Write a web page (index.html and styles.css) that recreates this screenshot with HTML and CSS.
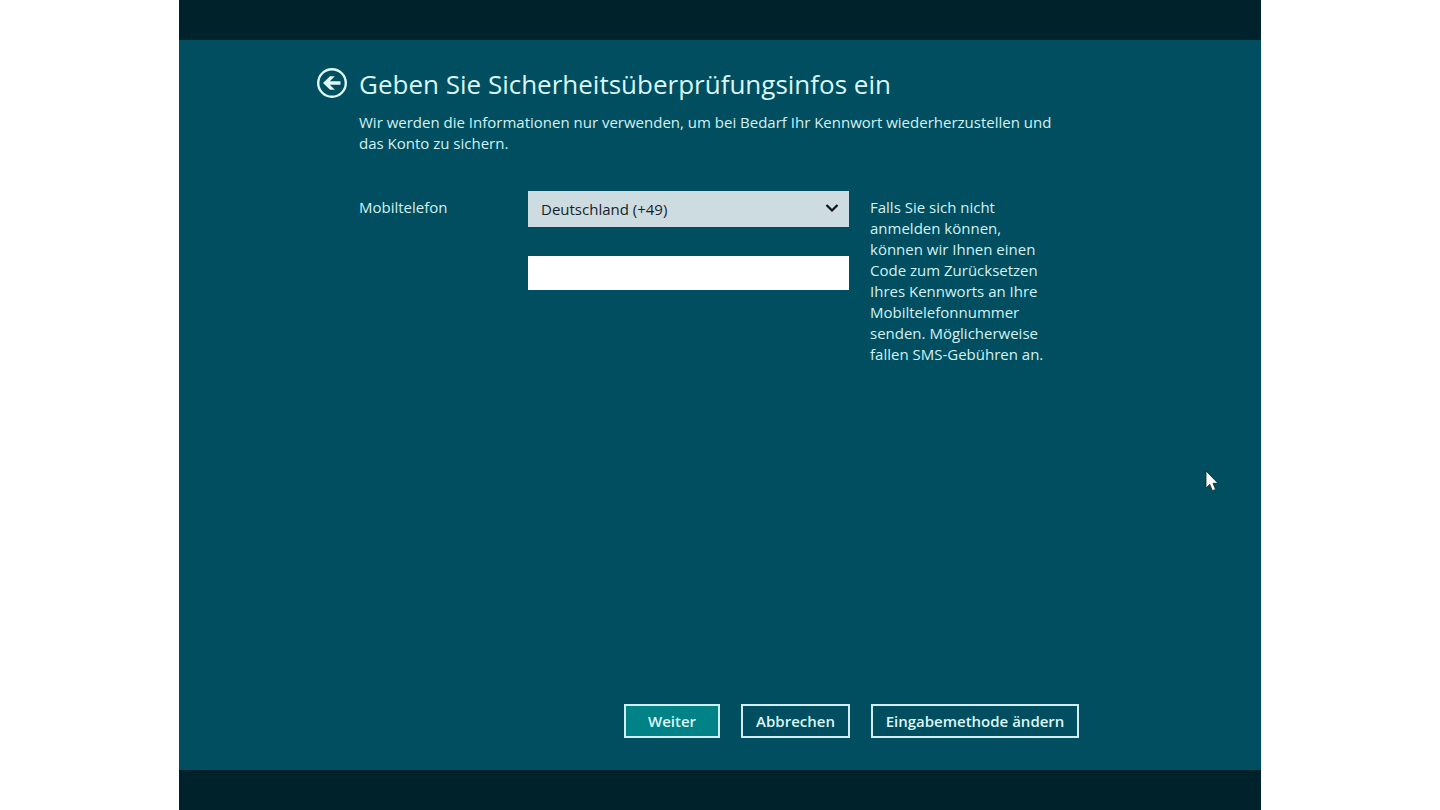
FILE: index.html
```html
<!DOCTYPE html>
<html lang="de">
<head>
<meta charset="utf-8">
<meta name="viewport" content="width=device-width, initial-scale=1">
<title>Sicherheitsüberprüfungsinfos</title>
<link rel="stylesheet" href="styles.css">
</head>
<body>
<div class="screen">
  <form class="panel">
    <header class="head">
      <button class="back" type="button" aria-label="Zurück">
        <svg viewBox="0 0 32 32" aria-hidden="true">
          <circle cx="15" cy="15" r="13.800" fill="none" stroke="currentColor" stroke-width="2.400"/>
          <path d="M6 15 13 8.200h4.800L12.800 13.300H23.500v3.400H12.800l5 5.100H13z" fill="currentColor"/>
        </svg>
      </button>
      <h1 class="title">Geben Sie Sicherheitsüberprüfungsinfos ein</h1>
    </header>
    <main class="body">
      <p class="intro">Wir werden die Informationen nur verwenden, um bei Bedarf Ihr Kennwort wiederherzustellen und<br>das Konto zu sichern.</p>
      <div class="row">
        <label class="label" for="country">Mobiltelefon</label>
        <div class="fields">
          <div class="select-wrap">
            <select class="select" id="country">
              <option>Deutschland (+49)</option>
            </select>
            <svg class="chevron" viewBox="0 0 14 10" aria-hidden="true">
              <path d="M1.500 2 7 7.500 12.500 2" fill="none" stroke="currentColor" stroke-width="2.200"/>
            </svg>
          </div>
          <input class="input" type="tel" aria-label="Telefonnummer">
        </div>
        <p class="help">Falls Sie sich nicht<br>anmelden können,<br>können wir Ihnen einen<br>Code zum Zurücksetzen<br>Ihres Kennworts an Ihre<br>Mobiltelefonnummer<br>senden. Möglicherweise<br>fallen SMS-Gebühren an.</p>
      </div>
    </main>
    <footer class="actions">
      <button class="btn btn-primary" type="submit">Weiter</button>
      <button class="btn btn-cancel" type="button">Abbrechen</button>
      <button class="btn btn-method" type="button">Eingabemethode ändern</button>
    </footer>
  </form>
  <svg class="pointer" viewBox="0 0 14 22" aria-hidden="true">
    <path d="M1 1v17l3.800-3.600 2.600 6.300 3.200-1.300-2.600-6.100H13z" fill="#fff" stroke="#10242c" stroke-width="0.800"/>
  </svg>
</div>
</body>
</html>
```
FILE: styles.css
```css
* {
  box-sizing: border-box;
}

body {
  margin: 0;
  background: #fff;
  color: #d3f1f4;
  font: 15px/21px "Open Sans", "Noto Sans", sans-serif;
}

.screen {
  position: relative;
  display: flex;
  flex-direction: column;
  max-width: 1082px;
  min-height: 100vh;
  margin: 0 auto;
  padding: 40px 0;
  background: #00232b;
}

.panel {
  display: flex;
  flex: 1;
  flex-direction: column;
  padding: 24px 182px 32px 138px;
  background: #004e5f;
}

.head {
  display: flex;
  align-items: center;
  gap: 10px;
}

.back {
  flex: none;
  width: 32px;
  height: 32px;
  padding: 0;
  border: 0;
  background: none;
  color: #dff8f9;
}

.back svg {
  display: block;
}

.title {
  margin: 0;
  color: #d9f6f8;
  font-size: 26px;
  font-weight: 400;
  line-height: 40px;
  white-space: nowrap;
}

.body {
  flex: 1;
  padding-left: 42px;
}

.intro {
  margin: 8px 0 37px;
  white-space: nowrap;
}

.row {
  display: grid;
  grid-template-columns: 169px 321px 1fr;
}

.label {
  padding-top: 6px;
}

.fields {
  display: grid;
  align-content: start;
  gap: 29px;
}

.select-wrap {
  position: relative;
}

.select {
  display: block;
  width: 100%;
  height: 36px;
  padding: 0 32px 0 13px;
  border: 0;
  border-radius: 0;
  appearance: none;
  background: #ccdce1;
  color: #17232a;
  font: inherit;
}

.chevron {
  position: absolute;
  top: 12px;
  right: 10px;
  width: 14px;
  height: 10px;
  color: #111;
  pointer-events: none;
}

.input {
  width: 100%;
  height: 34px;
  padding: 0 13px;
  border: 0;
  background: #fff;
  color: #17232a;
  font: inherit;
}

.help {
  margin: 0;
  padding: 6px 0 0 21px;
  white-space: nowrap;
}

.actions {
  display: flex;
  justify-content: flex-end;
  gap: 21px;
}

.btn {
  height: 34px;
  padding: 0;
  border: 2px solid #d3eef1;
  background: transparent;
  color: #dcf7f9;
  font: inherit;
  font-weight: 600;
  white-space: nowrap;
}

.btn-primary {
  width: 96px;
  background: #008287;
}

.btn-cancel {
  width: 109px;
}

.btn-method {
  width: 208px;
}

.pointer {
  position: absolute;
  top: 470px;
  right: 42px;
  width: 14px;
  height: 22px;
}
```
